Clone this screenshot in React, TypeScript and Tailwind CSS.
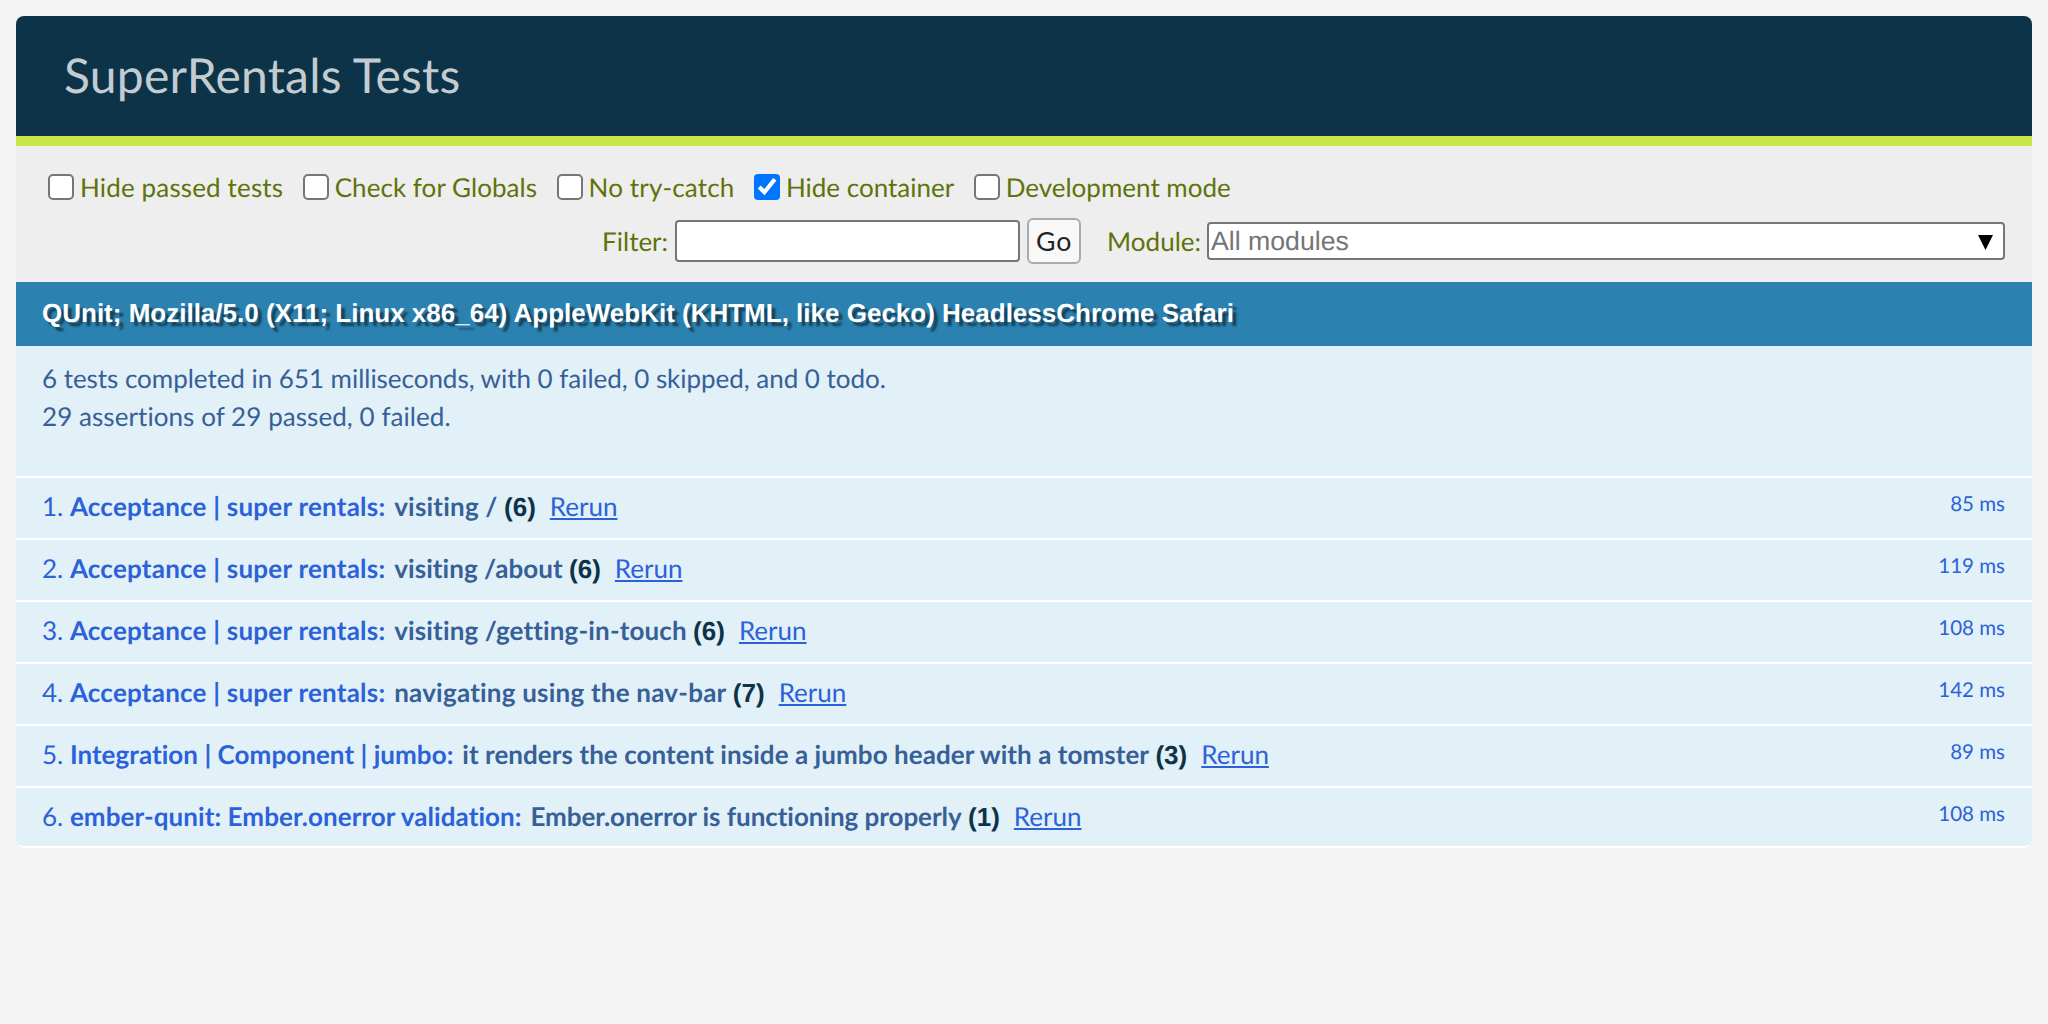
import React from 'react';

const options = [
    { label: 'Hide passed tests', checked: false, spacing: 'tracking-[0.15px]' },
    { label: 'Check for Globals', checked: false, spacing: 'tracking-[0.05px]' },
    { label: 'No try-catch', checked: false, spacing: 'tracking-[0.15px]' },
    { label: 'Hide container', checked: true, spacing: 'tracking-normal' },
    { label: 'Development mode', checked: false, spacing: 'tracking-normal' },
];

const tests = [
    { module: 'Acceptance | super rentals:', moduleSpacing: 'tracking-[0.23px]', name: 'visiting /', nameSpacing: 'tracking-[0.2px]', count: 6, time: '85 ms' },
    { module: 'Acceptance | super rentals:', moduleSpacing: 'tracking-[0.23px]', name: 'visiting /about', nameSpacing: 'tracking-[0.06px]', count: 6, time: '119 ms' },
    { module: 'Acceptance | super rentals:', moduleSpacing: 'tracking-[0.23px]', name: 'visiting /getting-in-touch', nameSpacing: 'tracking-[0.14px]', count: 6, time: '108 ms' },
    { module: 'Acceptance | super rentals:', moduleSpacing: 'tracking-[0.23px]', name: 'navigating using the nav-bar', nameSpacing: 'tracking-[0.22px]', count: 7, time: '142 ms' },
    { module: 'Integration | Component | jumbo:', moduleSpacing: 'tracking-[0.05px]', name: 'it renders the content inside a jumbo header with a tomster', nameSpacing: 'tracking-[0.06px]', count: 3, time: '89 ms' },
    { module: 'ember-qunit: Ember.onerror validation:', moduleSpacing: 'tracking-[0.07px]', name: 'Ember.onerror is functioning properly', nameSpacing: 'tracking-[-0.05px]', count: 1, time: '108 ms' },
];

const App: React.FC = () => {
    return (
        <div className="min-h-screen bg-[#f4f4f4] p-4 font-['Lato',sans-serif] [text-rendering:geometricPrecision]">
            <div className="overflow-hidden rounded-[8px]">
                <h1 className="h-[120px] bg-[#0d3349] pl-[48px] pt-[30px] text-[48px] font-normal leading-[60px] tracking-[0.22px] text-[#c2ccd1]">
                    SuperRentals Tests
                </h1>
                <div className="h-[10px] bg-[#c6e746]" />

                <div className="flex h-[136px] flex-col bg-[#eeeeee] pl-[32px] pr-[27px] pt-[28px] text-[26px] text-[#5e740b]">
                    <div className="flex h-[26px] items-center gap-[19.5px]">
                        {options.map((option) => (
                            <label key={option.label} className={`flex items-center gap-[6px] leading-[26px] ${option.spacing}`}>
                                <input type="checkbox" defaultChecked={option.checked} className="m-0 h-[13px] w-[13px] [zoom:2]" />
                                {option.label}
                            </label>
                        ))}
                    </div>
                    <div className="mt-[18px] flex items-center justify-end">
                        <label htmlFor="qunit-filter">Filter:</label>
                        <input
                            id="qunit-filter"
                            type="text"
                            className="ml-[7px] h-[42px] w-[345px] rounded-[4px] border-2 border-[#767676] bg-white"
                        />
                        <button className="ml-[7px] h-[46px] w-[54px] rounded-[6px] border-2 border-[#aaaaaa] bg-[#f8f8f8] text-[26.67px] leading-none tracking-[1px] text-[#222222]">
                            Go
                        </button>
                        <span className="ml-[26px]">Module:</span>
                        <div className="ml-[6px] flex h-[38px] w-[798px] items-center justify-between rounded-[4px] border-2 border-[#767676] bg-white pl-[2px] pr-[10px] font-['Liberation_Sans',sans-serif] text-[26.67px] text-[#757575]">
                            <span>All modules</span>
                            <svg width="15" height="15" viewBox="0 0 15 15" className="mt-[2px]">
                                <polygon points="0,0 15,0 7.5,15" fill="#000000" />
                            </svg>
                        </div>
                    </div>
                </div>

                <h2 className="h-[64px] bg-[#2b81af] pl-[26px] font-['Liberation_Sans',sans-serif] text-[26px] font-bold leading-[62px] text-white [text-shadow:rgba(0,0,0,0.5)_4px_4px_2px]">
                    QUnit; Mozilla/5.0 (X11; Linux x86_64) AppleWebKit (KHTML, like Gecko) HeadlessChrome Safari
                </h2>

                <div className="h-[130px] bg-[#e2f0f7] pl-[26px] pt-[13px] text-[26px] leading-[38px] text-[#366097]">
                    <div className="tracking-[-0.03px]">6 tests completed in 651 milliseconds, with 0 failed, 0 skipped, and 0 todo.</div>
                    <div className="tracking-[0.07px]">29 assertions of 29 passed, 0 failed.</div>
                </div>

                <ol className="m-0 list-none overflow-hidden rounded-b-[8px] p-0">
                    {tests.map((test, i) => (
                        <li
                            key={i}
                            className="flex h-[62px] items-start justify-between border-t-2 border-white bg-[#e2f0f7] pl-[26px] pr-[27px] pt-[10px] last:border-b-2 last:rounded-b-[8px]"
                        >
                            <div className="text-[26px] leading-[36px] text-[#366097]">
                                <span className="font-normal text-[#2b62d9]">{i + 1}. </span>
                                <strong className="font-bold">
                                    <span className={`mr-[2.5px] text-[#2b62d9] ${test.moduleSpacing}`}>{test.module}</span>{' '}
                                    <span className={test.nameSpacing}>{test.name}</span>{' '}
                                    <b className="font-['Liberation_Sans',sans-serif] text-[#0d3349]">({test.count})</b>
                                </strong>
                                <a href="#" className="ml-[14px] text-[#2b62d9] underline">
                                    Rerun
                                </a>
                            </div>
                            <span className="-mt-[2px] text-[20.5px] leading-[36px] text-[#2b62d9]">{test.time}</span>
                        </li>
                    ))}
                </ol>
            </div>
        </div>
    );
};

export default App;
